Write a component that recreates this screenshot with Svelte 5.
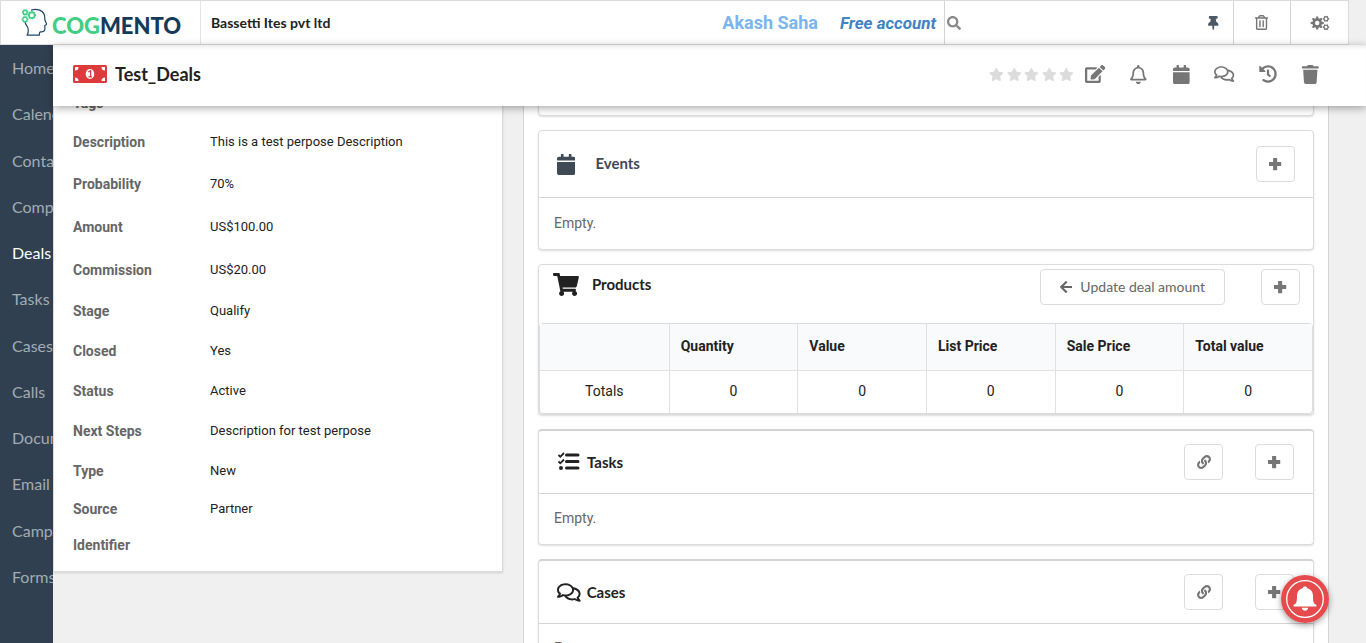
<script>
  const icons = {
    plus: [448, 'M165 32h118c9 0 16 7 16 16v133h133c9 0 16 7 16 16v118c0 9-7 16-16 16H299v133c0 9-7 16-16 16H165c-9 0-16-7-16-16V331H16c-9 0-16-7-16-16V197c0-9 7-16 16-16h133V48c0-9 7-16 16-16z'],
    calendar: [448, 'M12 192h424c6.6 0 12 5.4 12 12v260c0 26.5-21.5 48-48 48H48c-26.5 0-48-21.5-48-48V204c0-6.6 5.4-12 12-12zm436-44v-36c0-26.5-21.5-48-48-48h-48V12c0-6.6-5.4-12-12-12h-40c-6.6 0-12 5.4-12 12v52H160V12c0-6.6-5.4-12-12-12h-40c-6.6 0-12 5.4-12 12v52H48C21.5 64 0 85.5 0 112v36c0 6.6 5.4 12 12 12h424c6.6 0 12-5.4 12-12z'],
    cart: [576, 'M528.12 301.319l47.273-208C578.806 78.301 567.391 64 551.99 64H159.208l-9.166-44.81C147.758 8.021 137.93 0 126.529 0H24C10.745 0 0 10.745 0 24v16c0 13.255 10.745 24 24 24h69.883l70.248 343.435C147.325 417.1 136 435.222 136 456c0 30.928 25.072 56 56 56s56-25.072 56-56c0-15.674-6.447-29.835-16.824-40h209.647C430.447 426.165 424 440.326 424 456c0 30.928 25.072 56 56 56s56-25.072 56-56c0-22.172-12.888-41.332-31.579-50.405l5.517-24.276c3.413-15.018-8.002-29.319-23.403-29.319H218.117l-6.545-32h293.145c11.206 0 20.92-7.754 23.403-18.681z'],
    trash: [448, 'M432 32H312l-9.4-18.7A24 24 0 0 0 281.1 0H166.8a23.72 23.72 0 0 0-21.4 13.3L136 32H16A16 16 0 0 0 0 48v32a16 16 0 0 0 16 16h416a16 16 0 0 0 16-16V48a16 16 0 0 0-16-16zM53.2 467a48 48 0 0 0 47.9 45h245.8a48 48 0 0 0 47.9-45L416 128H32z'],
    trashOutline: [448, 'M268 416h24a12 12 0 0 0 12-12V188a12 12 0 0 0-12-12h-24a12 12 0 0 0-12 12v216a12 12 0 0 0 12 12zM432 80h-82.41l-34-56.7A48 48 0 0 0 274.41 0H173.59a48 48 0 0 0-41.16 23.3L98.41 80H16A16 16 0 0 0 0 96v16a16 16 0 0 0 16 16h16v336a48 48 0 0 0 48 48h288a48 48 0 0 0 48-48V128h16a16 16 0 0 0 16-16V96a16 16 0 0 0-16-16zM171.84 50.91A6 6 0 0 1 177 48h94a6 6 0 0 1 5.15 2.91L293.61 80H154.39zM368 464H80V128h288zm-212-48h24a12 12 0 0 0 12-12V188a12 12 0 0 0-12-12h-24a12 12 0 0 0-12 12v216a12 12 0 0 0 12 12z'],
    bell: [448, 'M439.39 362.29c-19.32-20.76-55.47-51.99-55.47-154.29 0-77.7-54.48-139.9-127.94-155.16V32c0-17.67-14.32-32-31.98-32s-31.98 14.33-31.98 32v20.84C118.56 68.1 64.08 130.3 64.08 208c0 102.3-36.15 133.53-55.47 154.29-6 6.45-8.66 14.16-8.61 21.71.11 16.4 12.98 32 32.1 32h383.8c19.12 0 32-15.6 32.1-32 .05-7.55-2.61-15.27-8.61-21.71zM67.53 368c21.22-27.97 44.42-74.33 44.53-159.42 0-.2-.06-.38-.06-.58 0-61.86 50.14-112 112-112s112 50.14 112 112c0 .2-.06.38-.06.58.11 85.1 23.31 131.46 44.53 159.42H67.53zM224 512c35.32 0 63.97-28.65 63.97-64H160.03c0 35.35 28.65 64 63.97 64z'],
    comments: [576, 'M532 386.2c27.5-27.1 44-61.1 44-98.2 0-80-76.5-146.1-176.2-157.9C368.3 72.5 294.3 32 208 32 93.1 32 0 103.6 0 192c0 37 16.5 71 44 98.2-15.3 30.7-37.3 54.5-37.7 54.9-6.3 6.7-8.1 16.5-4.4 25 3.6 8.5 12 14 21.2 14 53.5 0 96.7-20.2 125.2-38.8 9.2 2.1 18.7 3.7 28.4 4.9C208.1 407.6 281.8 448 368 448c20.8 0 40.8-2.4 59.8-6.8C456.3 459.7 499.4 480 553 480c9.2 0 17.5-5.5 21.2-14 3.6-8.5 1.9-18.3-4.4-25-.4-.3-22.5-24.1-37.8-54.8zm-392.8-92.3L122.1 305c-14.1 9.1-28.5 16.3-43.1 21.4 2.7-4.7 5.4-9.7 8-14.8l15.5-31.1L77.7 256C64.2 242.6 48 220.7 48 192c0-60.7 73.3-112 160-112s160 51.3 160 112-73.3 112-160 112c-16.5 0-33-1.9-49-5.6l-19.8-4.5zM498.3 352l-24.7 24.4 15.5 31.1c2.6 5.1 5.3 10.1 8 14.8-14.6-5.1-29-12.3-43.1-21.4l-17.1-11.1-19.9 4.6c-16 3.7-32.5 5.6-49 5.6-54 0-102.2-20.1-131.3-49.7C338 339.5 416 272.9 416 192c0-3.4-.4-6.7-.7-10C479.7 196.5 528 238.8 528 288c0 28.7-16.2 50.6-29.7 64z'],
    history: [512, 'M504 255.531c.253 136.64-111.18 248.372-247.82 248.468-59.015.042-113.223-20.53-155.822-54.911-11.077-8.94-11.905-25.541-1.839-35.607l11.267-11.267c8.609-8.609 22.353-9.551 31.891-1.984C173.062 425.135 212.781 440 256 440c101.705 0 184-82.311 184-184 0-101.705-82.311-184-184-184-48.814 0-93.149 18.969-126.068 49.932l50.754 50.754c10.08 10.08 2.941 27.314-11.313 27.314H24c-8.837 0-16-7.163-16-16V38.627c0-14.254 17.234-21.393 27.314-11.314l49.372 49.372C129.209 34.136 189.552 8 256 8c136.81 0 247.747 110.78 248 247.531zm-180.912 78.784l9.823-12.63c8.138-10.463 6.253-25.542-4.21-33.679L288 256.349V152c0-13.255-10.745-24-24-24h-16c-13.255 0-24 10.745-24 24v135.651l65.409 50.874c10.463 8.137 25.541 6.253 33.679-4.21z'],
    edit: [576, 'M402.6 83.2l90.2 90.2c3.8 3.8 3.8 10 0 13.8L274.4 405.6l-92.8 10.3c-12.4 1.4-22.9-9.1-21.5-21.5l10.3-92.8L388.8 83.2c3.8-3.8 10-3.8 13.8 0zm162-22.9l-48.8-48.8c-15.2-15.2-39.9-15.2-55.2 0l-35.4 35.4c-3.8 3.8-3.8 10 0 13.8l90.2 90.2c3.8 3.8 10 3.8 13.8 0l35.4-35.4c15.2-15.3 15.2-40 0-55.2zM384 346.2V448H64V128h229.8c3.2 0 6.2-1.3 8.5-3.5l40-40c7.6-7.6 2.2-20.5-8.5-20.5H48C21.5 64 0 85.5 0 112v352c0 26.5 21.5 48 48 48h352c26.5 0 48-21.5 48-48V306.2c0-10.7-12.9-16-20.5-8.5l-40 40c-2.2 2.3-3.5 5.3-3.5 8.5z'],
    star: [576, 'M259.3 17.8L194 150.2 47.9 171.5c-26.2 3.8-36.7 36.1-17.7 54.6l105.7 103-25 145.5c-4.5 26.3 23.2 46 46.4 33.7L288 439.6l130.7 68.7c23.2 12.2 50.9-7.4 46.4-33.7l-25-145.5 105.7-103c19-18.5 8.5-50.8-17.7-54.6L382 150.2 316.7 17.8c-11.7-23.6-45.6-23.9-57.4 0z'],
    search: [512, 'M505 442.7L405.3 343c-4.5-4.5-10.6-7-17-7H372c27.6-35.3 44-79.7 44-128C416 93.1 322.9 0 208 0S0 93.1 0 208s93.1 208 208 208c48.3 0 92.7-16.4 128-44v16.3c0 6.4 2.5 12.5 7 17l99.7 99.7c9.4 9.4 24.6 9.4 33.9 0l28.3-28.3c9.4-9.4 9.4-24.6.1-34zM208 336c-70.7 0-128-57.2-128-128 0-70.7 57.2-128 128-128 70.7 0 128 57.2 128 128 0 70.7-57.2 128-128 128z'],
    pin: [384, 'M298.028 214.267L285.793 96H328c13.255 0 24-10.745 24-24V24c0-13.255-10.745-24-24-24H56C42.745 0 32 10.745 32 24v48c0 13.255 10.745 24 24 24h42.207L85.972 214.267C37.465 236.82 0 277.261 0 328c0 13.255 10.745 24 24 24h136v104.007c0 1.242.289 2.467.845 3.578l24 48c2.941 5.882 11.364 5.893 14.311 0l24-48a8.008 8.008 0 0 0 .845-3.578V352h136c13.255 0 24-10.745 24-24-.001-51.183-37.983-91.42-85.973-113.733z'],
    arrow: [448, 'M257.5 445.1l-22.2 22.2c-9.4 9.4-24.6 9.4-33.9 0L7 273c-9.4-9.4-9.4-24.6 0-33.9L201.4 44.7c9.4-9.4 24.6-9.4 33.9 0l22.2 22.2c9.5 9.5 9.3 25-.4 34.3L136.6 216H424c13.3 0 24 10.7 24 24v32c0 13.3-10.7 24-24 24H136.6l120.5 114.8c9.8 9.3 10 24.8.4 34.3z'],
    link: [512, 'M326.612 185.391c59.747 59.809 58.927 155.698.36 214.59-.11.12-.24.25-.36.37l-67.2 67.2c-59.27 59.27-155.699 59.262-214.96 0-59.27-59.26-59.27-155.7 0-214.96l37.106-37.106c9.84-9.84 26.786-3.3 27.294 10.606.648 17.722 3.826 35.527 9.69 52.721 1.986 5.822.567 12.262-3.783 16.612l-13.087 13.087c-28.026 28.026-28.905 73.66-1.155 101.96 28.024 28.579 74.086 28.749 102.325.51l67.2-67.19c28.191-28.191 28.073-73.757 0-101.83-3.701-3.694-7.429-6.564-10.341-8.569a16.037 16.037 0 0 1-6.947-12.606c-.396-10.567 3.348-21.456 11.698-29.806l21.054-21.055c5.521-5.521 14.182-6.199 20.584-1.731a152.482 152.482 0 0 1 20.522 17.197zM467.547 44.449c-59.261-59.262-155.69-59.27-214.96 0l-67.2 67.2c-.12.12-.25.25-.36.37-58.566 58.892-59.387 154.781.36 214.59a152.454 152.454 0 0 0 20.521 17.196c6.402 4.468 15.064 3.789 20.584-1.731l21.054-21.055c8.35-8.35 12.094-19.239 11.698-29.806a16.037 16.037 0 0 0-6.947-12.606c-2.912-2.005-6.64-4.875-10.341-8.569-28.073-28.073-28.191-73.639 0-101.83l67.2-67.19c28.239-28.239 74.3-28.069 102.325.51 27.75 28.3 26.872 73.934-1.155 101.96l-13.087 13.087c-4.35 4.35-5.769 10.79-3.783 16.612 5.864 17.194 9.042 34.999 9.69 52.721.509 13.906 17.454 20.446 27.294 10.606l37.106-37.106c59.271-59.259 59.271-155.699.001-214.959z']
  };

  // Outline of a toothed wheel around (cx, cy).
  function gear(cx, cy, outer, inner, teeth) {
    const step = (Math.PI * 2) / teeth;
    const points = [];
    for (let i = 0; i < teeth; i++) {
      const a = i * step;
      for (const [shift, r] of [[-0.32, inner], [-0.2, outer], [0.2, outer], [0.32, inner]]) {
        const t = a + shift * step;
        points.push(`${(cx + r * Math.cos(t)).toFixed(2)} ${(cy + r * Math.sin(t)).toFixed(2)}`);
      }
    }
    return `M${points.join('L')}Z`;
  }

  const nav = ['Home', 'Calendar', 'Contacts', 'Companies', 'Deals', 'Tasks', 'Cases', 'Calls', 'Documents', 'Email', 'Campaigns', 'Forms'];

  const fields = [
    ['Tags', '', 'sm'],
    ['Description', 'This is a test perpose Description', 'lg'],
    ['Probability', '70%', 'lg'],
    ['Amount', 'US$100.00', 'xl'],
    ['Commission', 'US$20.00', 'xl'],
    ['Stage', 'Qualify', 'md'],
    ['Closed', 'Yes', 'md'],
    ['Status', 'Active', 'md'],
    ['Next Steps', 'Description for test perpose', 'md'],
    ['Type', 'New', 'md'],
    ['Source', 'Partner', 'sm'],
    ['Identifier', '', 'sm']
  ];

  const actions = [
    ['edit', 'Edit', 18],
    ['bell', 'Reminders', 19],
    ['calendar', 'Calendar', 19],
    ['comments', 'Comments', 18],
    ['history', 'History', 18],
    ['trash', 'Delete', 19]
  ];

  const columns = ['', 'Quantity', 'Value', 'List Price', 'Sale Price', 'Total value'];
  const totals = ['Totals', '0', '0', '0', '0', '0'];
</script>

{#snippet icon(name, size)}
  <svg class="icon" height={size} width={(size * icons[name][0]) / 512} viewBox="0 0 {icons[name][0]} 512" aria-hidden="true">
    <path d={icons[name][1]} />
  </svg>
{/snippet}

<div class="page">
  <header class="topbar">
    <a class="brand" href="#home">
      <svg width="28" height="30" viewBox="20 8 28 30" fill="none" aria-hidden="true">
        <path d="M31 10.2C36 8.400 42.300 9.800 44.200 14.500C45.200 17 44.500 18.500 44.900 20C45.300 21.500 46.700 23.300 46.500 24.200C46.200 25.100 44.900 24.900 44.800 25.600L44.900 28.500C45 31.500 43 32 40.500 31.800C39.300 31.900 39.300 33 39.300 35.200H27.200C28.800 31.500 28.600 28.500 27 26C26 24.500 25.200 23.600 25 22" stroke="#1d4668" stroke-width="1.200" />
        <g stroke="#3fcf86" stroke-width="1.200">
          <path d={gear(25.2, 12.4, 2.600, 1.800, 6)} />
          <path d={gear(31.8, 15.2, 3.600, 2.500, 8)} />
          <path d={gear(25, 19.4, 2.800, 2, 6)} />
        </g>
      </svg>
      <span class="wordmark"><span>COG</span>MENTO</span>
    </a>
    <div class="company">Bassetti Ites pvt ltd</div>
    <a class="user" href="#profile">Akash Saha</a>
    <a class="plan" href="#plan">Free account</a>
    <label class="search">
      {@render icon('search', 14)}
      <input type="text" aria-label="Search" />
    </label>
    <button class="tool pin" aria-label="Pin">{@render icon('pin', 14)}</button>
    <button class="tool" aria-label="Deleted items">{@render icon('trashOutline', 15)}</button>
    <button class="tool last" aria-label="Settings">
      <svg class="icon" width="20" height="16" viewBox="0 0 20 16" aria-hidden="true">
        <path fill-rule="evenodd" d="{gear(7.200, 8, 6.600, 4.800, 8)}M9.400 8A2.200 2.200 0 1 0 5 8A2.200 2.200 0 1 0 9.400 8Z" />
        <path fill-rule="evenodd" d="{gear(16, 3.800, 3.200, 2.600, 6)}M17.400 3.800A1.400 1.400 0 1 0 14.600 3.800A1.400 1.400 0 1 0 17.400 3.800Z" />
        <path fill-rule="evenodd" d="{gear(16, 12.200, 3.200, 2.600, 6)}M17.400 12.200A1.400 1.400 0 1 0 14.600 12.200A1.400 1.400 0 1 0 17.400 12.200Z" />
      </svg>
    </button>
  </header>

  <div class="body">
    <nav>
      {#each nav as item}
        <a href="#{item}" class:current={item === 'Deals'}>{item}</a>
      {/each}
    </nav>

    <main>
      <div class="titlebar">
        <svg width="34" height="18" viewBox="0 0 34 18" aria-hidden="true">
          <rect width="34" height="18" rx="1.500" fill="#dd3a3c" />
          <path d="M2 2H5.500A3.500 3.500 0 0 1 2 5.500ZM32 2H28.500A3.500 3.500 0 0 0 32 5.500ZM2 16H5.500A3.500 3.500 0 0 0 2 12.500ZM32 16H28.500A3.500 3.500 0 0 1 32 12.500Z" fill="#fff" />
          <ellipse cx="17" cy="9" rx="4.300" ry="5" fill="#fff" />
          <path d="M15.200 7L17.600 5.800V11.500M15.400 11.800H19" fill="none" stroke="#dd3a3c" stroke-width="1.300" />
        </svg>
        <h1>Test_Deals</h1>
        <div class="stars">
          {#each [1, 2, 3, 4, 5] as n (n)}
            <button aria-label="Rate {n}">{@render icon('star', 13)}</button>
          {/each}
        </div>
        <div class="actions">
          {#each actions as [name, label, size]}
            <button aria-label={label}>{@render icon(name, size)}</button>
          {/each}
        </div>
      </div>

      <div class="content">
        <dl class="details">
          {#each fields as [name, value, size]}
            <div class="field {size}">
              <dt>{name}</dt>
              <dd>{value}</dd>
            </div>
          {/each}
        </dl>

        <div class="related">
          <section class="card previous"></section>

          <section class="card">
            <div class="head events">
              {@render icon('calendar', 21)}
              <h2>Events</h2>
              <button class="btn" aria-label="Add event">{@render icon('plus', 14)}</button>
            </div>
            <p>Empty.</p>
          </section>

          <section class="card">
            <div class="head products">
              {@render icon('cart', 23)}
              <h2>Products</h2>
              <button class="btn update">{@render icon('arrow', 14)}Update deal amount</button>
              <button class="btn" aria-label="Add product">{@render icon('plus', 14)}</button>
            </div>
            <table>
              <thead>
                <tr>{#each columns as c}<th>{c}</th>{/each}</tr>
              </thead>
              <tbody>
                <tr>{#each totals as t}<td>{t}</td>{/each}</tr>
              </tbody>
            </table>
          </section>

          <section class="card linked">
            <div class="head">
              <svg class="icon" width="24" height="20" viewBox="0 0 24 20" aria-hidden="true">
                <path d="M9.500 3H21M9.500 9.500H21M9.500 16H21" stroke="currentColor" stroke-width="3" stroke-linecap="round" />
                <path d="M1.500 3L3.300 4.800L7 1M1.500 9.500L3.300 11.300L7 7.500" fill="none" stroke="currentColor" stroke-width="1.800" />
                <circle cx="4" cy="16" r="2" />
              </svg>
              <h2>Tasks</h2>
              <button class="btn" aria-label="Link task">{@render icon('link', 14)}</button>
              <button class="btn" aria-label="Add task">{@render icon('plus', 14)}</button>
            </div>
            <p>Empty.</p>
          </section>

          <section class="card linked">
            <div class="head">
              {@render icon('comments', 21)}
              <h2>Cases</h2>
              <button class="btn" aria-label="Link case">{@render icon('link', 14)}</button>
              <button class="btn" aria-label="Add case">{@render icon('plus', 14)}</button>
            </div>
            <p>Empty.</p>
          </section>
        </div>
      </div>
    </main>
  </div>

  <button class="notify" aria-label="Notifications">
    <svg width="48" height="48" viewBox="0 0 48 48" aria-hidden="true">
      <circle cx="24" cy="24" r="24" fill="#e54b4d" />
      <circle cx="24" cy="24" r="18.300" fill="none" stroke="#fff" stroke-width="1.300" />
      <path d="M24 11.500C25.200 11.500 26 12.200 26.200 13.200C30 14 32 17 32 21C32 26.500 32.500 28.500 35 29.800C36 30.400 35.800 31.500 34.800 31.500H13.200C12.200 31.500 12 30.400 13 29.800C15.500 28.500 16 26.500 16 21C16 17 18 14 21.800 13.200C22 12.200 22.800 11.500 24 11.500ZM20.800 32.800H27.200C27 34.800 25.600 35.800 24 35.800S21 34.800 20.800 32.800Z" fill="#fff" />
    </svg>
  </button>
</div>

<style>
  :global(body) {
    margin: 0;
    background: #f0f0f0;
  }

  .page {
    display: flex;
    flex-direction: column;
    height: 100vh;
    overflow: hidden;
    font: 14px/20px Roboto, sans-serif;
    color: #222;
  }

  .page * {
    box-sizing: border-box;
  }

  a {
    text-decoration: none;
  }

  button {
    display: flex;
    align-items: center;
    justify-content: center;
    padding: 0;
    border: 0;
    background: none;
    color: #767676;
    font: 14px/20px Lato, sans-serif;
    cursor: pointer;
  }

  .icon {
    flex: none;
    fill: currentColor;
  }

  .topbar {
    display: flex;
    flex: none;
    align-items: center;
    height: 45px;
    margin-right: 17px;
    border: 1px solid #dcdcdd;
    background: #fff;
  }

  .brand {
    display: flex;
    align-items: center;
    align-self: stretch;
    gap: 4px;
    width: 200px;
    padding-left: 19px;
    border-right: 1px solid #e4e4e4;
  }

  .wordmark {
    padding-top: 7px;
    color: #143a5a;
    font: 900 22px/24px Lato, sans-serif;
  }

  .wordmark span {
    color: #40cf83;
  }

  .company {
    flex: 1;
    padding-left: 10px;
    font: bold 14px/20px Lato, sans-serif;
  }

  .user {
    margin-right: 22px;
    color: #7cb5ec;
    font-size: 18px;
    font-weight: bold;
  }

  .plan {
    margin-right: 8px;
    color: #4183c4;
    font-size: 17px;
    font-weight: bold;
    font-style: italic;
  }

  .search {
    display: flex;
    align-items: center;
    align-self: stretch;
    width: 250px;
    padding-left: 2px;
    border-left: 1px solid #d4d4d5;
    color: #888;
  }

  .search input {
    flex: 1;
    min-width: 0;
    height: 36px;
    border: 0;
    outline: 0;
    background: none;
    font: 14px/20px Lato, sans-serif;
  }

  .tool {
    align-self: stretch;
    width: 57px;
    border-left: 1px solid #d4d4d5;
  }

  .last {
    width: 58px;
  }

  .pin {
    width: 39px;
    border-left: 0;
    color: #4b5967;
  }

  .body {
    display: flex;
    flex: 1;
    min-height: 0;
  }

  nav {
    display: flex;
    flex: none;
    flex-direction: column;
    width: 53px;
    padding-bottom: 43px;
    overflow: hidden;
    background: #304050;
  }

  nav a {
    display: flex;
    flex: 1;
    align-items: center;
    padding-left: 12px;
    color: #a4abb2;
    font: 16px/20px Lato, sans-serif;
  }

  nav .current {
    color: #fff;
  }

  main {
    display: flex;
    flex: 1;
    flex-direction: column;
    min-width: 0;
  }

  .titlebar {
    display: flex;
    flex: none;
    align-items: center;
    height: 61px;
    padding: 0 34px 3px 20px;
    background: #fff;
    box-shadow: 0 2px 8px rgba(0, 0, 0, 0.35), inset 0 5px 5px -4px rgba(0, 0, 0, 0.12);
    z-index: 1;
  }

  h1 {
    flex: 1;
    margin: 0 0 0 8px;
    font: bold 18px/24px Lato, sans-serif;
  }

  .stars,
  .actions {
    display: flex;
    align-items: center;
  }

  .stars {
    gap: 3px;
  }

  .stars button {
    color: #dcdcdc;
  }

  .actions button {
    width: 43px;
    height: 28px;
  }

  .content {
    display: flex;
    flex: 1;
    align-items: flex-start;
    gap: 20px;
    min-height: 0;
    padding-right: 37px;
    margin-top: -21px;
    overflow: hidden;
  }

  .details {
    flex: 0 0 450px;
    margin: 0;
    padding: 0 19px 8px;
    border: 1px solid #dcdcdd;
    border-top: 0;
    background: #fff;
    box-shadow: 0 1px 2px rgba(34, 36, 38, 0.15);
    font-size: 13px;
  }

  .field {
    display: grid;
    grid-template-columns: 137px 1fr;
    align-items: center;
  }

  .sm {
    height: 36px;
  }

  .md {
    height: 40px;
  }

  .lg {
    height: 42px;
  }

  .xl {
    height: 43px;
  }

  dt {
    color: #666;
    font-size: 14px;
    font-weight: bold;
  }

  dd {
    margin: 0;
  }

  .related {
    display: flex;
    flex: 1;
    flex-direction: column;
    gap: 14px;
    min-width: 0;
    padding: 0 14px 14px;
    border: 1px solid #d4d4d5;
    border-top: 0;
    background: #fff;
  }

  .card {
    border: 1px solid #dcdcdd;
    border-radius: 4px;
    background: #fff;
    box-shadow: 0 1px 2px rgba(34, 36, 38, 0.15);
  }

  .previous {
    height: 31px;
  }

  .linked {
    border-top: 2px solid #d4d4d5;
  }

  .head {
    display: flex;
    align-items: center;
    height: 63px;
    padding: 0 19px 0 18px;
    border-bottom: 1px solid #d4d4d5;
  }

  h2 {
    flex: 1;
    margin: 0 0 0 6px;
    font: bold 15px/20px Lato, sans-serif;
  }

  .head .btn + .btn {
    margin-left: 32px;
  }

  .events {
    height: 67px;
    padding-right: 18px;
    color: #3f4a56;
  }

  .events h2 {
    margin-left: 20px;
    padding-bottom: 2px;
  }

  .products {
    align-items: flex-start;
    height: 58px;
    padding: 4px 13px 0 14px;
    border: 0;
  }

  .products > .icon {
    margin-top: 4px;
  }

  .products h2 {
    margin: 5px 0 0 13px;
  }

  .products .btn + .btn {
    margin-left: 36px;
  }

  .btn {
    width: 39px;
    height: 36px;
    border: 1px solid #dcdcdd;
    border-radius: 4px;
    background: #fff;
  }

  .update {
    gap: 8px;
    width: auto;
    padding: 0 19px;
    color: #666;
  }

  p {
    margin: 0;
    padding: 15px 15px 16px;
    color: #666;
  }

  .linked p {
    padding: 14px 15px 16px;
  }

  table {
    width: 100%;
    table-layout: fixed;
    border: 1px solid #dcdcdd;
    border-radius: 4px;
    border-spacing: 0;
  }

  th,
  td {
    padding: 0 11px 2px;
    border-left: 1px solid #e1e1e2;
  }

  th:first-child,
  td:first-child {
    border-left: 0;
  }

  th {
    height: 47px;
    border-bottom: 1px solid #e1e1e2;
    background: #f9fafb;
    text-align: left;
  }

  td {
    height: 42px;
    text-align: center;
  }

  .notify {
    position: fixed;
    right: 37px;
    bottom: 20px;
    z-index: 2;
    border-radius: 50%;
    box-shadow: 0 2px 6px rgba(0, 0, 0, 0.4);
  }
</style>
